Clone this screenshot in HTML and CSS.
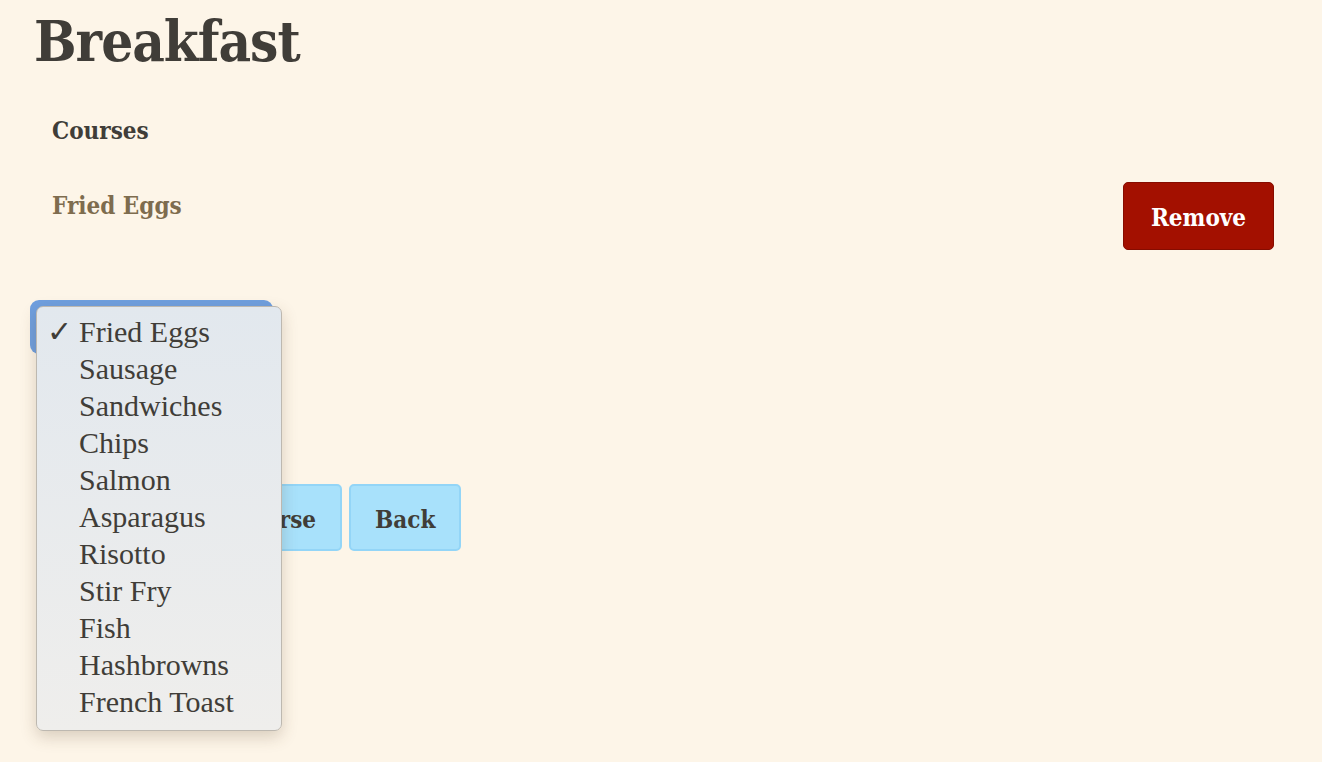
FILE: index.html
```html
<!DOCTYPE html>
<html lang="en">
<head>
<meta charset="utf-8">
<title>Breakfast</title>
<link rel="stylesheet" href="styles.css">
</head>
<body>
<main class="page">
  <h1 class="title">Breakfast</h1>
  <section class="courses">
    <h3 class="courses-heading">Courses</h3>
    <div class="course-row">
      <span class="course-name">Fried Eggs</span>
      <button class="btn btn-remove" type="button">Remove</button>
    </div>
  </section>
  <div class="picker">
    <div class="select-box"></div>
    <ul class="menu">
      <li class="menu-item checked"><span class="check">✓</span>Fried Eggs</li>
      <li class="menu-item">Sausage</li>
      <li class="menu-item">Sandwiches</li>
      <li class="menu-item">Chips</li>
      <li class="menu-item">Salmon</li>
      <li class="menu-item">Asparagus</li>
      <li class="menu-item">Risotto</li>
      <li class="menu-item">Stir Fry</li>
      <li class="menu-item">Fish</li>
      <li class="menu-item">Hashbrowns</li>
      <li class="menu-item">French Toast</li>
    </ul>
  </div>
  <div class="actions">
    <button class="btn btn-light" type="button">Add Course</button>
    <button class="btn btn-light" type="button">Back</button>
  </div>
</main>
</body>
</html>
```
FILE: styles.css
```css
html, body {
  margin: 0;
  padding: 0;
}
body {
  background: #fdf5e8;
  color: #403d38;
  font-family: "DejaVu Serif", serif;
  width: 1322px;
  height: 762px;
  overflow: hidden;
}
.page {
  padding: 0 48px 0 34px;
}
.title {
  margin: 0;
  padding-top: 6px;
  font-size: 56px;
  line-height: 70px;
  font-weight: bold;
  font-stretch: condensed;
  letter-spacing: -1px;
  color: #403d38;
}
.courses {
  padding-left: 18px;
}
.courses-heading {
  margin: 0;
  padding-top: 40px;
  font-size: 24px;
  line-height: 30px;
  font-weight: bold;
  font-stretch: condensed;
  color: #403d38;
}
.course-row {
  display: flex;
  justify-content: space-between;
  align-items: flex-start;
  margin-top: 39px;
}
.course-name {
  margin-top: 6px;
  font-size: 24px;
  line-height: 30px;
  font-weight: bold;
  font-stretch: condensed;
  color: #7e6c4e;
}
.btn {
  font-family: "DejaVu Serif", serif;
  font-weight: bold;
  font-stretch: condensed;
  font-size: 24px;
  border-radius: 5px;
  padding-top: 4px;
  cursor: pointer;
}
.btn-remove {
  width: 151px;
  height: 68px;
  background: #a31000;
  border: 1px solid #860c00;
  color: #ffffff;
  margin-top: -3px;
}
.picker {
  position: relative;
  margin-top: 50px;
  margin-left: -4px;
  width: 243px;
  height: 54px;
}
.select-box {
  width: 243px;
  height: 54px;
  border-radius: 9px;
  background: #6f9fdf;
}
.menu {
  position: absolute;
  left: 6px;
  top: 6px;
  width: 244px;
  margin: 0;
  padding: 6px 0 10px;
  list-style: none;
  background: linear-gradient(#e2e8ee, #efeeec);
  border: 1px solid #bdb8b0;
  border-radius: 7px;
  box-shadow: 0 6px 16px rgba(90, 70, 40, 0.22);
  z-index: 2;
  font-family: "Liberation Serif", serif;
}
.menu-item {
  position: relative;
  height: 37px;
  line-height: 37px;
  padding-left: 42px;
  font-size: 30px;
  color: #403d38;
}
.check {
  position: absolute;
  left: 10px;
  top: 0;
  font-family: "DejaVu Sans", sans-serif;
  font-size: 30px;
  font-weight: bold;
}
.actions {
  display: flex;
  gap: 7px;
  margin-top: 130px;
  padding-left: 117px;
}
.btn-light {
  height: 67px;
  padding-left: 24px;
  padding-right: 24px;
  background: #a8e1fb;
  border: 2px solid #93d5f7;
  color: #403d38;
}
```
